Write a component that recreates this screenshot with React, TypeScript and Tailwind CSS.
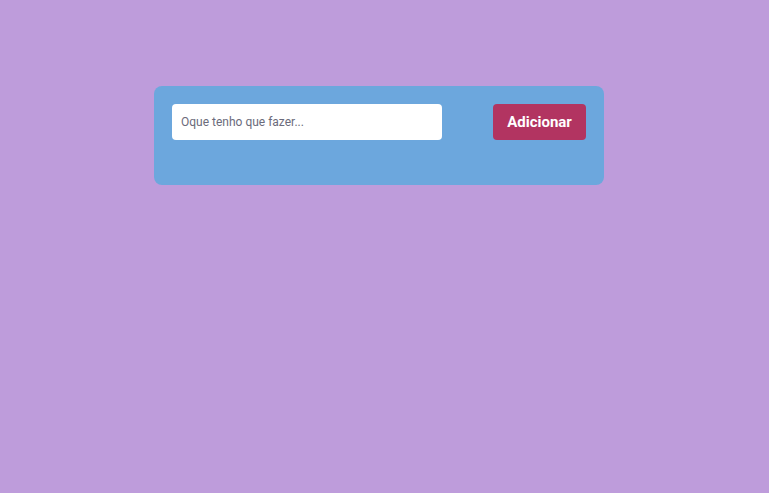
export default function App() {
  return (
    <div className="min-h-[493px] w-full bg-[#be9cdb] pt-[86px] pl-[154px]" style={{ fontFamily: "Roboto, sans-serif" }}>
      <div className="w-[450px] h-[99px] rounded-[8px] bg-[#6ca7dd] px-[18px] pt-[18px]">
        <div className="flex items-center justify-between">
          <input
            className="w-[270px] h-[36px] rounded-[4px] bg-white px-[9px] text-[12px] text-[#333] placeholder:text-[#6b6b7b] outline-none"
            placeholder="Oque tenho que fazer..."
          />
          <button className="w-[93px] h-[36px] rounded-[4px] bg-[#b23461] text-white text-[15px] font-bold">
            Adicionar
          </button>
        </div>
      </div>
    </div>
  );
}
